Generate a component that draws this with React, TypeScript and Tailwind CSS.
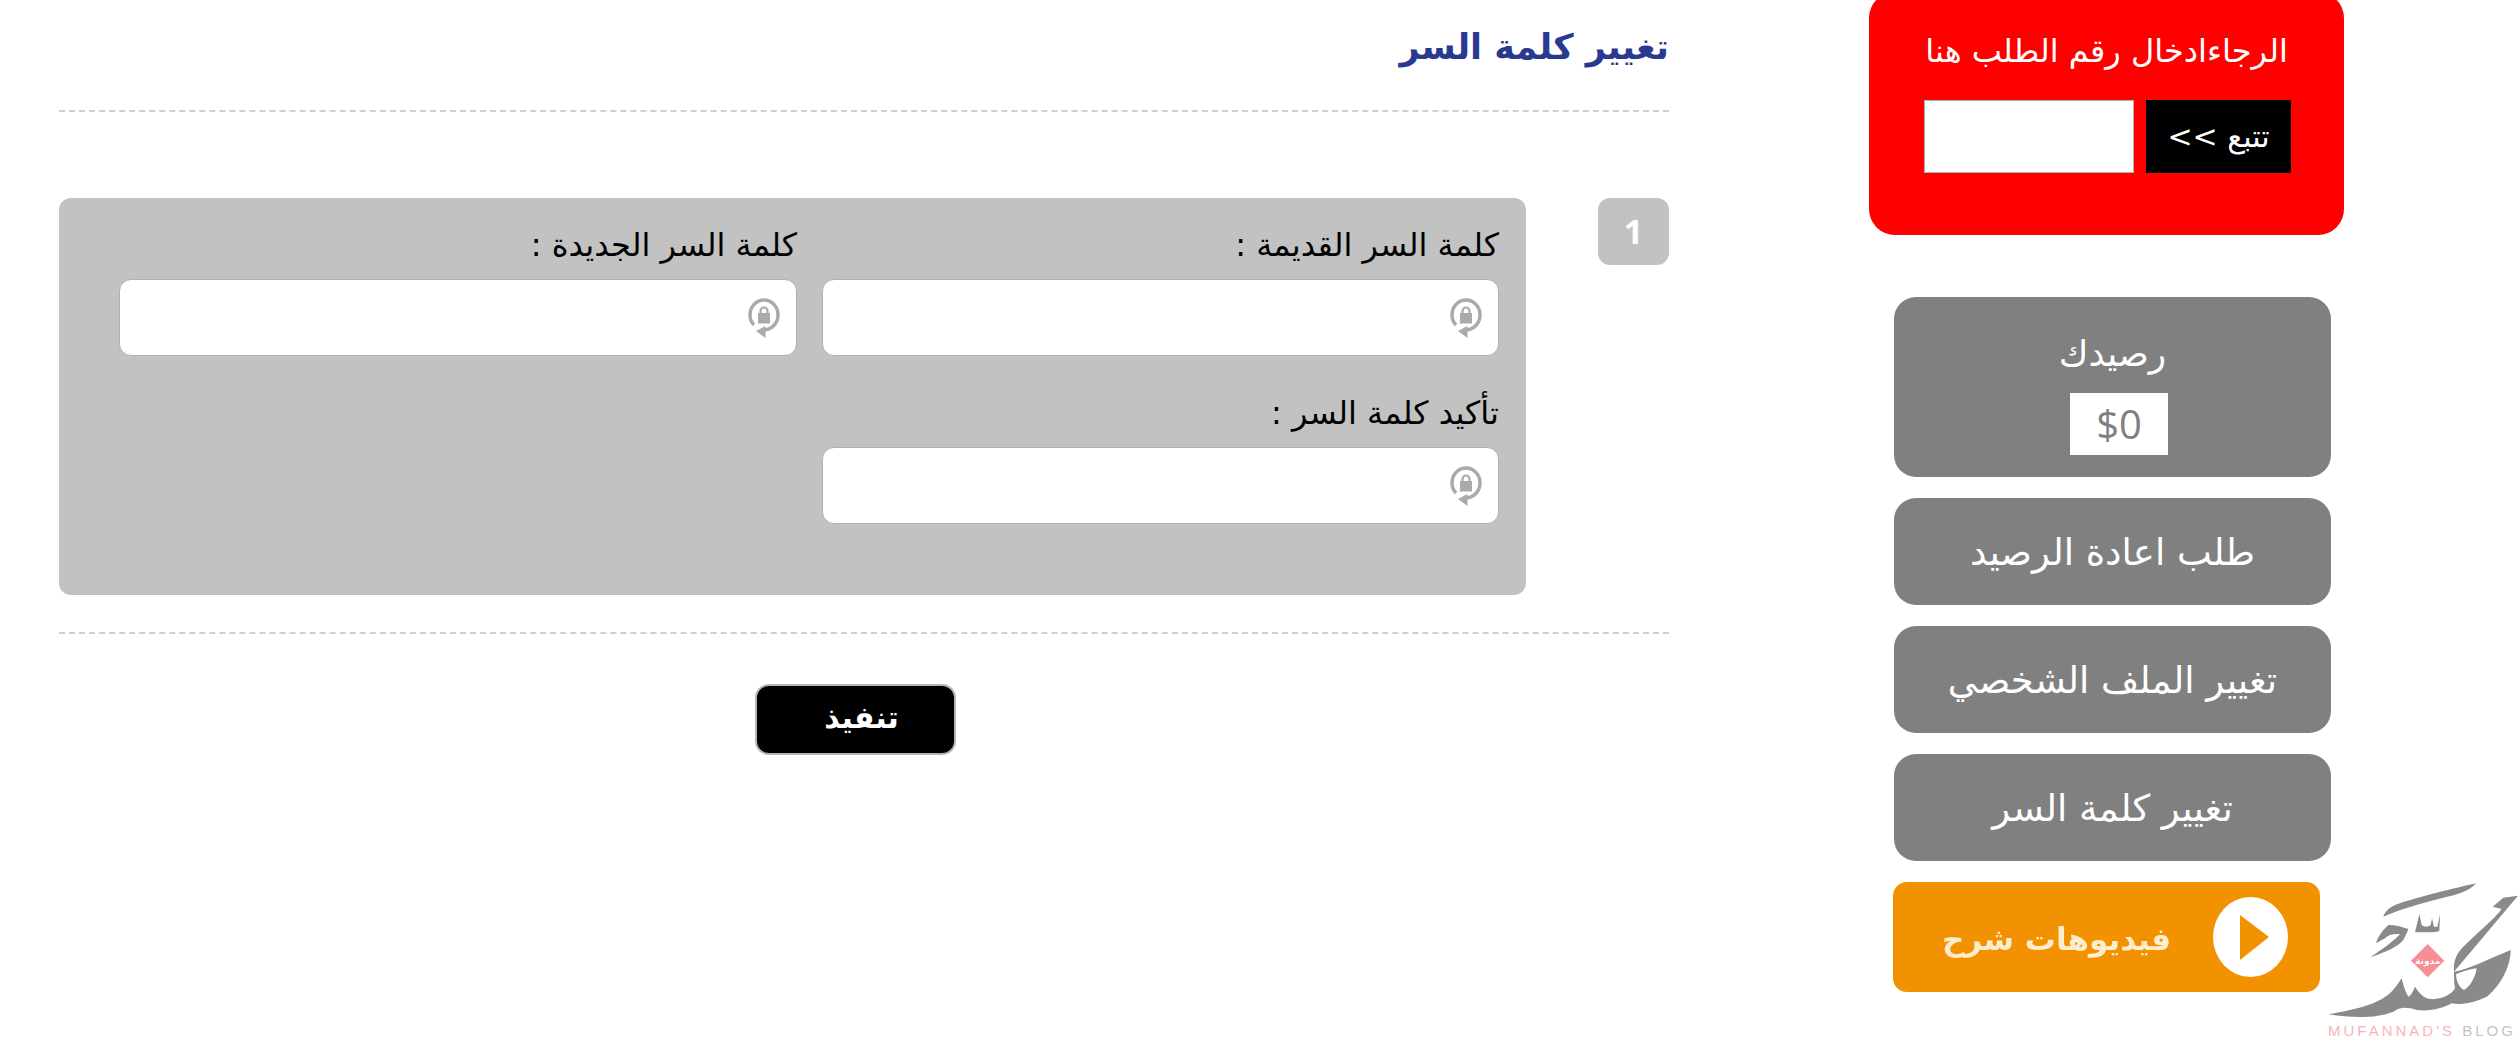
import React from 'react'

const font = "font-['DejaVu_Sans',sans-serif]"

function LockIcon() {
  return (
    <svg width="32" height="40" viewBox="0 0 32 40" className="absolute right-[16px] top-[18px] blur-[0.4px]">
      <path d="M15 32C24 32 30 25 30 17A14 15 0 0 0 2 17C2 21 3.5 24.5 6 27" fill="none" stroke="#aaaaaa" strokeWidth="3.5" />
      <rect x="10" y="15" width="12" height="10.5" fill="#aaaaaa" />
      <path d="M12.5 15v-2a3.5 3.5 0 0 1 7 0v2" fill="none" stroke="#aaaaaa" strokeWidth="2.2" />
      <path d="M17.5 28l-9.5 5 9.5 7z" fill="#aaaaaa" />
    </svg>
  )
}

function Field({ label, width }: { label: string; width: string }) {
  return (
    <div className={width}>
      <div dir="rtl" className="h-[60px] text-[32px] leading-[52px] text-black whitespace-nowrap">{label}</div>
      <div className="relative h-[77px] rounded-[12px] border border-[#b0b0b0] bg-white">
        <LockIcon />
      </div>
    </div>
  )
}

function SideLink({ label }: { label: string }) {
  return (
    <div dir="rtl" className="flex h-[107px] w-[437px] items-center justify-center rounded-[22px] bg-[#808080] pt-[3px] text-[37px] text-white">
      {label}
    </div>
  )
}

function Logo() {
  return (
    <div className="relative -mt-[7px] h-[164px] w-[198px] shrink-0">
      <svg width="198" height="150" viewBox="0 0 594 450" fill="#8a8a8a" className="blur-[0.3px]">
        <path d="M468 25C380 45 280 70 225 90C205 100 195 110 190 125C235 105 300 85 370 68C410 60 445 50 468 25z" />
        <path d="M205 150C190 165 175 180 168 205L195 190C205 178 225 175 240 178C225 195 185 225 150 247C190 235 235 215 250 195C258 180 262 170 265 162C245 155 225 150 205 150z" />
        <path d="M285 172L298 118L305 150C315 158 325 155 332 150L336 130L342 155L352 155L360 118L358 168C340 175 310 170 285 172z" />
        <path d="M594 62L550 68L518 95L545 102C520 135 470 175 430 215C410 235 400 255 402 290C440 285 500 255 572 225C572 270 545 330 500 365C460 385 420 390 395 385C370 400 330 410 290 405C260 395 240 395 220 410C170 430 100 430 25 418C100 405 170 390 210 355C225 340 235 325 245 310C250 330 255 350 265 365C275 360 280 345 285 335C295 350 310 370 330 372C360 375 395 360 405 340C402 325 402 310 402 290z" />
        <path d="M408 298C430 288 455 282 470 280C465 310 450 335 432 345C420 340 408 320 408 298z" fill="#ffffff" />
        <polygon points="323,207 373,257 323,307 273,257" fill="#f58f96" />
        <text x="323" y="266" textAnchor="middle" fontSize="27" fontWeight="700" fill="#ffffff">مدونة</text>
      </svg>
      <div className="absolute left-[8px] top-[149px] whitespace-nowrap font-['Liberation_Sans',sans-serif] text-[15px] leading-[13px] tracking-[3px] text-[#f9b4b9]">
        MUFANNAD'S <span className="text-[#c4c4c4]">BLOG</span>
      </div>
    </div>
  )
}

export default function App() {
  return (
    <div className={`${font} flex h-[1039px] w-[2518px] overflow-hidden bg-white`}>
      <main className="ml-[59px] w-[1610px] shrink-0">
        <h1 dir="rtl" className="h-[110px] pt-[20px] text-[35px] leading-[54px] font-bold text-[#2a3990]">تغيير كلمة السر</h1>
        <div className="border-t-2 border-dashed border-[#cfcfcf]" />
        <div className="mt-[86px] flex items-start justify-between">
          <section className="h-[397px] w-[1467px] rounded-[12px] bg-[#c2c2c2] pt-[21px]">
            <div className="flex justify-end gap-[25px] pr-[27px]">
              <Field label="كلمة السر الجديدة :" width="w-[678px]" />
              <Field label="كلمة السر القديمة :" width="w-[677px]" />
            </div>
            <div className="mt-[31px] flex justify-end pr-[27px]">
              <Field label="تأكيد كلمة السر :" width="w-[677px]" />
            </div>
          </section>
          <div className="flex h-[67px] w-[71px] items-center justify-center rounded-[12px] bg-[#c2c2c2] font-['Open_Sans',sans-serif] text-[34px] font-bold text-white">1</div>
        </div>
        <div className="mt-[37px] border-t-2 border-dashed border-[#cfcfcf]" />
        <div className="mt-[50px] ml-[696px] flex h-[71px] w-[201px] items-center justify-center rounded-[14px] border-2 border-[#b5b5b5] bg-black pb-[4px] pl-[12px] text-[30px] font-bold text-white">
          تنفيذ
        </div>
      </main>
      <aside className="ml-[200px] w-[475px] shrink-0">
        <div className="-mt-[8px] h-[243px] rounded-[26px] bg-[#ff0000] pt-[32px]">
          <div dir="rtl" className="text-center text-[32px] leading-[54px] text-white">الرجاءادخال رقم الطلب هنا</div>
          <div className="mt-[22px] flex justify-center gap-[12px] pl-[2px]">
            <div className="h-[73px] w-[210px] border border-[#b0b0b0] bg-white" />
            <div dir="rtl" className="flex h-[73px] w-[145px] items-center justify-center bg-black text-[30px] text-white">تتبع &gt;&gt;</div>
          </div>
        </div>
        <div className="mt-[62px] flex flex-col gap-[21px] pl-[25px]">
          <div className="flex h-[180px] w-[437px] flex-col items-center rounded-[22px] bg-[#808080] pt-[27px]">
            <div className="text-[36px] leading-[60px] text-white">رصيدك</div>
            <div className="mt-[9px] ml-[13px] flex h-[62px] w-[98px] items-center justify-center bg-white font-['Open_Sans',sans-serif] text-[40px] text-[#808080]">$0</div>
          </div>
          <SideLink label="طلب اعادة الرصيد" />
          <SideLink label="تغيير الملف الشخصي" />
          <SideLink label="تغيير كلمة السر" />
        </div>
        <div className="mt-[21px] flex w-[649px] items-start">
          <div className="ml-[24px] flex h-[110px] w-[427px] shrink-0 items-center justify-end rounded-[14px] bg-[#f39200] pr-[32px]">
            <span dir="rtl" className="mt-[4px] mr-[42px] text-[31px] font-bold text-[#fdeccd] blur-[0.5px]">فيديوهات شرح</span>
            <span className="relative h-[80px] w-[75px] rounded-[50%] bg-white">
              <svg width="75" height="80" viewBox="0 0 75 80" className="absolute inset-0">
                <path d="M27 18l29 22-29 23z" fill="#f39200" />
              </svg>
            </span>
          </div>
          <Logo />
        </div>
      </aside>
    </div>
  )
}
